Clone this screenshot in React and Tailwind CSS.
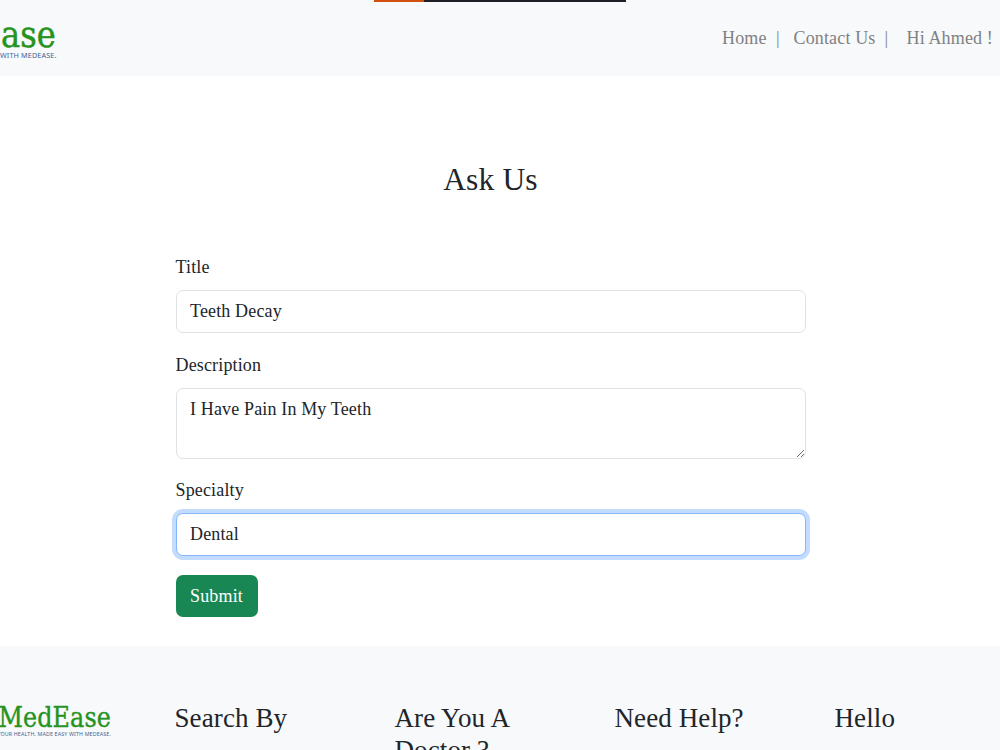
import React, { useState } from "react";

function HeaderLogo() {
  return (
    <svg className="block h-[75px] w-[57px] shrink-0" viewBox="0 0 57 75">
      <text
        x="1"
        y="46"
        textLength="55"
        lengthAdjust="spacingAndGlyphs"
        fill="#26931f"
        stroke="#26931f"
        strokeWidth="0.5"
        fontSize="35"
        fontFamily="'DejaVu Serif', serif"
      >
        ase
      </text>
      <text
        x="0"
        y="57.2"
        textLength="56.5"
        lengthAdjust="spacingAndGlyphs"
        fill="#3f5f96"
        fontSize="7.8"
        fontFamily="'Noto Sans', sans-serif"
      >
        WITH MEDEASE.
      </text>
    </svg>
  );
}

function FooterLogo() {
  return (
    <svg className="block h-[50px] w-[112px] shrink-0" viewBox="0 0 112 50">
      <text
        x="-1.5"
        y="31"
        textLength="112.5"
        lengthAdjust="spacingAndGlyphs"
        fill="#26931f"
        stroke="#26931f"
        strokeWidth="0.4"
        fontSize="28"
        fontFamily="'DejaVu Serif', serif"
      >
        MedEase
      </text>
      <text
        x="-2.5"
        y="39.6"
        textLength="113.5"
        lengthAdjust="spacingAndGlyphs"
        fill="#3f5f96"
        fontSize="6"
        fontFamily="'Noto Sans', sans-serif"
      >
        YOUR HEALTH, MADE EASY WITH MEDEASE.
      </text>
    </svg>
  );
}

const columns = ["Search By", "Are You A Doctor ?", "Need Help?", "Hello"];

export default function App() {
  const [title, setTitle] = useState("Teeth Decay");
  const [description, setDescription] = useState("I Have Pain In My Teeth");
  const [specialty, setSpecialty] = useState("Dental");

  const handleSubmit = (e) => {
    e.preventDefault();
  };

  return (
    <div className="relative flex h-[750px] w-[1000px] flex-col overflow-hidden bg-white font-['Liberation_Serif',serif] text-[18px] leading-[27px] tracking-[0.15px] text-[#212529]">
      {/* top strip */}
      <div className="absolute left-[374px] top-0 flex h-[1.5px] w-[252px] bg-[#211f26]">
        <div className="w-[50px] bg-[#d1500f]"></div>
      </div>

      {/* navbar */}
      <nav className="flex h-[76px] shrink-0 items-center justify-between bg-[#f8f9fa] text-[#808182]">
        <HeaderLogo />
        <ul className="flex pr-[7px]">
          <li className="w-[71.5px]">
            Home<span className="ml-[9.5px]">|</span>
          </li>
          <li className="w-[113px]">
            Contact Us<span className="ml-[9px]">|</span>
          </li>
          <li>Hi Ahmed !</li>
        </ul>
      </nav>

      {/* form */}
      <main className="flex h-[570px] shrink-0 flex-col pl-[175.5px] pr-[194.5px] pt-[85px]">
        <h3 className="text-center text-[31.5px] leading-[38px]">Ask Us</h3>
        <form className="mt-[55px] flex flex-col items-start" onSubmit={handleSubmit}>
          <label htmlFor="title">Title</label>
          <input
            id="title"
            className="mt-[9px] h-[43px] w-full rounded-[7px] border border-[#dee2e6] bg-white px-[13.5px] outline-none"
            value={title}
            onChange={(e) => setTitle(e.target.value)}
          />
          <label htmlFor="description" className="mt-[19px]">
            Description
          </label>
          <textarea
            id="description"
            className="mt-[8.5px] block h-[71px] w-full resize-y rounded-[7px] border border-[#dee2e6] bg-white px-[13.5px] py-[7px] outline-none"
            value={description}
            onChange={(e) => setDescription(e.target.value)}
          />
          <label htmlFor="specialty" className="mt-[18.5px]">
            Specialty
          </label>
          <input
            id="specialty"
            className="mt-[9px] h-[43px] w-full rounded-[7px] border border-[#86b7fe] bg-white px-[13.5px] shadow-[0_0_0_4px_#c2dbff] outline-none"
            value={specialty}
            onChange={(e) => setSpecialty(e.target.value)}
          />
          <button
            type="submit"
            className="mt-[19px] h-[42px] w-[82px] rounded-[7px] bg-[#198754] text-white"
          >
            Submit
          </button>
        </form>
      </main>

      {/* footer */}
      <footer className="flex h-[200px] shrink-0 bg-[#f8f9fa] pt-[50px]">
        <div className="w-[174.5px] shrink-0">
          <FooterLogo />
        </div>
        {columns.map((name) => (
          <h4
            key={name}
            className="mt-[6px] w-[220px] shrink-0 pr-[70px] text-[27px] leading-[32.4px] tracking-[0.1px]"
          >
            {name}
          </h4>
        ))}
      </footer>
    </div>
  );
}
